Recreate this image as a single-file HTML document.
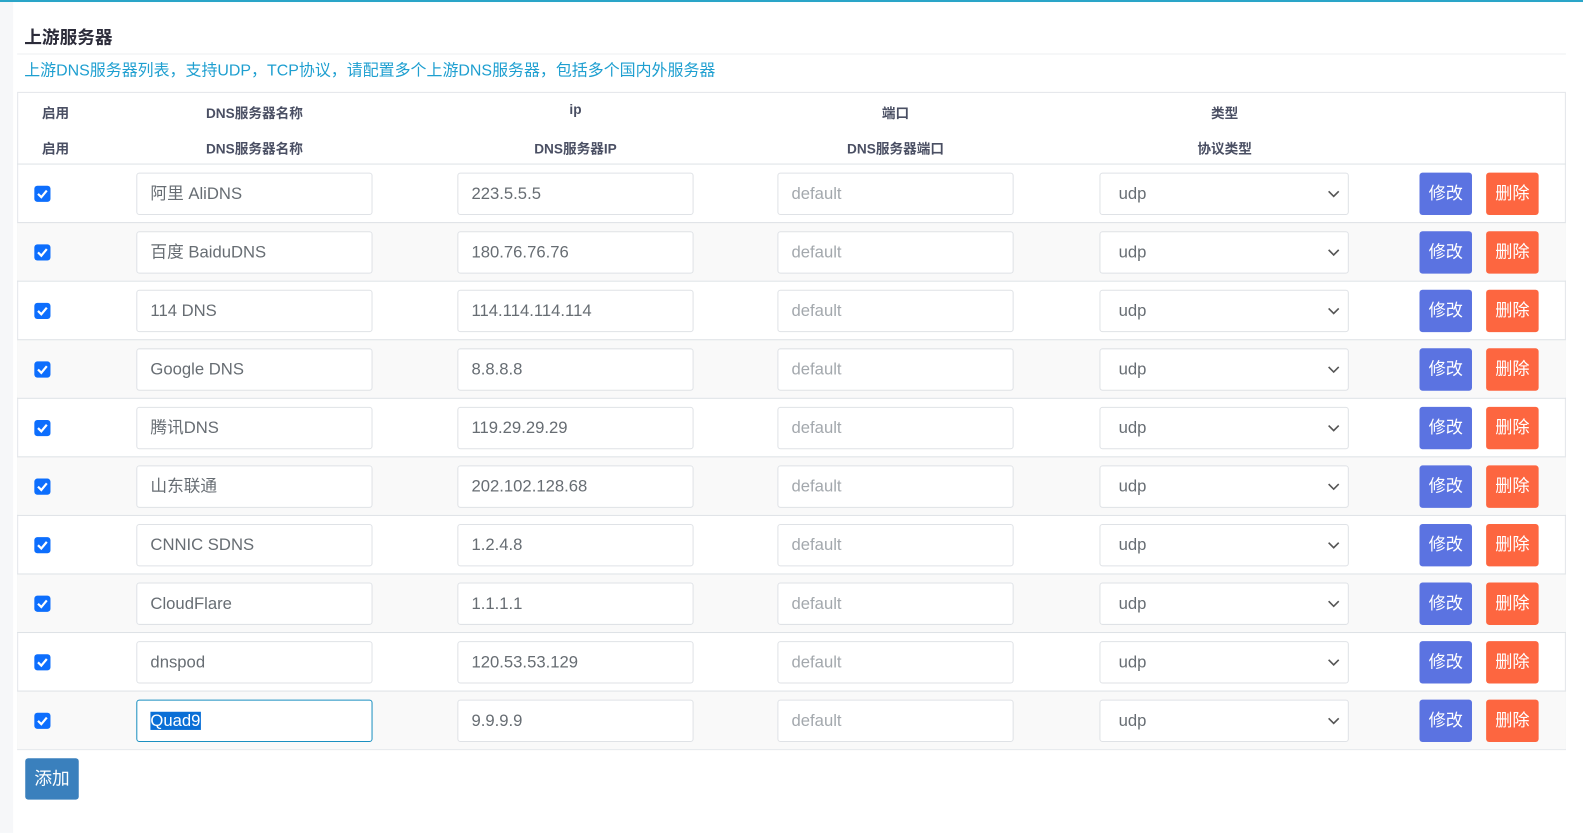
<!DOCTYPE html>
<html><head><meta charset="utf-8"><style>
*{box-sizing:border-box;margin:0;padding:0}
body{width:1583px;height:825px;background:#fff;font-family:"Liberation Sans","Noto Sans CJK SC",sans-serif;position:relative;overflow:hidden}
#w{position:absolute;left:0;top:0;width:1583px;height:825px;transform:scale(1.0096);transform-origin:0 0}
.strip{position:absolute;left:0;top:0;width:13px;height:825px;background:#f6f7f9}
.topline{position:absolute;left:0;top:0;width:1583px;height:2px;background:#2aa5c8}
.title{position:absolute;left:24px;top:24px;font-size:17.5px;font-weight:bold;color:#2c2c3a}
.hr{position:absolute;left:17px;top:53px;width:1534px;height:1px;background:#eceff2}
.desc{position:absolute;left:24px;top:57px;font-size:15.8px;color:#1e9fd0;white-space:nowrap}
.tbl{position:absolute;left:17px;top:91px;width:1534px;height:652px;border:1px solid #e3e6ea}
.th{position:absolute;font-size:13.5px;font-weight:bold;color:#4a4f63;transform:translateX(-50%);white-space:nowrap}
.row{position:absolute;left:17px;width:1534px;height:58px;border-top:1px solid #dee2e6}
.row.alt{background:#f9f9f9}
.cb{position:absolute;left:17px;top:21px;width:16px;height:16px;background:#0d6efd;border-radius:3px}
.cb svg{position:absolute;left:2px;top:2px}
.in{position:absolute;top:8px;height:42px;border:1px solid #dfe2e6;border-radius:3px;background:#fff;font-size:16.5px;color:#676d73;padding-left:13px;line-height:40px;white-space:nowrap}
.ph{color:#a3a8ad}
.sel{padding-left:18px}
.sel svg{position:absolute;right:8px;top:16px}
.b{position:absolute;top:8px;width:52px;height:42px;border-radius:3px;color:#fff;font-size:17px;text-align:center;line-height:42px}
.m{left:1389px;background:#5b73e1}
.d{left:1455px;background:#fd6640}
.focus{border:1px solid #1a8fc0}
.hl{background:#0a6fd6;color:#fff}
.add{position:absolute;left:25px;top:751px;width:53px;height:41px;background:#3a80bd;border-radius:3px;color:#fff;font-size:17.5px;text-align:center;line-height:41px}
</style></head><body><div id="w">
<div class="strip"></div><div class="topline"></div>
<div class="title">上游服务器</div>
<div class="hr"></div>
<div class="desc">上游DNS服务器列表，支持UDP，TCP协议，请配置多个上游DNS服务器，包括多个国内外服务器</div>
<div class="tbl"></div>
<div class="th" style="left:55px;top:101px">启用</div>
<div class="th" style="left:252px;top:101px">DNS服务器名称</div>
<div class="th" style="left:570px;top:101px">ip</div>
<div class="th" style="left:887px;top:101px">端口</div>
<div class="th" style="left:1213px;top:101px">类型</div>
<div class="th" style="left:55px;top:136px">启用</div>
<div class="th" style="left:252px;top:136px">DNS服务器名称</div>
<div class="th" style="left:570px;top:136px">DNS服务器IP</div>
<div class="th" style="left:887px;top:136px">DNS服务器端口</div>
<div class="th" style="left:1213px;top:136px">协议类型</div>
<div class="row" style="top:162px"><div class="cb"><svg width="12" height="12" viewBox="0 0 11 11"><path d="M1.5 5.5l3 3 5-6" stroke="#fff" stroke-width="2" fill="none"/></svg></div><div class="in" style="left:118px;width:234px">阿里 AliDNS</div><div class="in" style="left:436px;width:234px">223.5.5.5</div><div class="in ph" style="left:753px;width:234px">default</div><div class="in sel" style="left:1072px;width:247px">udp<svg width="12" height="8" viewBox="0 0 12 8"><path d="M1 1.5l5 5 5-5" stroke="#555" stroke-width="1.6" fill="none"/></svg></div><div class="b m">修改</div><div class="b d">删除</div></div>
<div class="row alt" style="top:220px"><div class="cb"><svg width="12" height="12" viewBox="0 0 11 11"><path d="M1.5 5.5l3 3 5-6" stroke="#fff" stroke-width="2" fill="none"/></svg></div><div class="in" style="left:118px;width:234px">百度 BaiduDNS</div><div class="in" style="left:436px;width:234px">180.76.76.76</div><div class="in ph" style="left:753px;width:234px">default</div><div class="in sel" style="left:1072px;width:247px">udp<svg width="12" height="8" viewBox="0 0 12 8"><path d="M1 1.5l5 5 5-5" stroke="#555" stroke-width="1.6" fill="none"/></svg></div><div class="b m">修改</div><div class="b d">删除</div></div>
<div class="row" style="top:278px"><div class="cb"><svg width="12" height="12" viewBox="0 0 11 11"><path d="M1.5 5.5l3 3 5-6" stroke="#fff" stroke-width="2" fill="none"/></svg></div><div class="in" style="left:118px;width:234px">114 DNS</div><div class="in" style="left:436px;width:234px">114.114.114.114</div><div class="in ph" style="left:753px;width:234px">default</div><div class="in sel" style="left:1072px;width:247px">udp<svg width="12" height="8" viewBox="0 0 12 8"><path d="M1 1.5l5 5 5-5" stroke="#555" stroke-width="1.6" fill="none"/></svg></div><div class="b m">修改</div><div class="b d">删除</div></div>
<div class="row alt" style="top:336px"><div class="cb"><svg width="12" height="12" viewBox="0 0 11 11"><path d="M1.5 5.5l3 3 5-6" stroke="#fff" stroke-width="2" fill="none"/></svg></div><div class="in" style="left:118px;width:234px">Google DNS</div><div class="in" style="left:436px;width:234px">8.8.8.8</div><div class="in ph" style="left:753px;width:234px">default</div><div class="in sel" style="left:1072px;width:247px">udp<svg width="12" height="8" viewBox="0 0 12 8"><path d="M1 1.5l5 5 5-5" stroke="#555" stroke-width="1.6" fill="none"/></svg></div><div class="b m">修改</div><div class="b d">删除</div></div>
<div class="row" style="top:394px"><div class="cb"><svg width="12" height="12" viewBox="0 0 11 11"><path d="M1.5 5.5l3 3 5-6" stroke="#fff" stroke-width="2" fill="none"/></svg></div><div class="in" style="left:118px;width:234px">腾讯DNS</div><div class="in" style="left:436px;width:234px">119.29.29.29</div><div class="in ph" style="left:753px;width:234px">default</div><div class="in sel" style="left:1072px;width:247px">udp<svg width="12" height="8" viewBox="0 0 12 8"><path d="M1 1.5l5 5 5-5" stroke="#555" stroke-width="1.6" fill="none"/></svg></div><div class="b m">修改</div><div class="b d">删除</div></div>
<div class="row alt" style="top:452px"><div class="cb"><svg width="12" height="12" viewBox="0 0 11 11"><path d="M1.5 5.5l3 3 5-6" stroke="#fff" stroke-width="2" fill="none"/></svg></div><div class="in" style="left:118px;width:234px">山东联通</div><div class="in" style="left:436px;width:234px">202.102.128.68</div><div class="in ph" style="left:753px;width:234px">default</div><div class="in sel" style="left:1072px;width:247px">udp<svg width="12" height="8" viewBox="0 0 12 8"><path d="M1 1.5l5 5 5-5" stroke="#555" stroke-width="1.6" fill="none"/></svg></div><div class="b m">修改</div><div class="b d">删除</div></div>
<div class="row" style="top:510px"><div class="cb"><svg width="12" height="12" viewBox="0 0 11 11"><path d="M1.5 5.5l3 3 5-6" stroke="#fff" stroke-width="2" fill="none"/></svg></div><div class="in" style="left:118px;width:234px">CNNIC SDNS</div><div class="in" style="left:436px;width:234px">1.2.4.8</div><div class="in ph" style="left:753px;width:234px">default</div><div class="in sel" style="left:1072px;width:247px">udp<svg width="12" height="8" viewBox="0 0 12 8"><path d="M1 1.5l5 5 5-5" stroke="#555" stroke-width="1.6" fill="none"/></svg></div><div class="b m">修改</div><div class="b d">删除</div></div>
<div class="row alt" style="top:568px"><div class="cb"><svg width="12" height="12" viewBox="0 0 11 11"><path d="M1.5 5.5l3 3 5-6" stroke="#fff" stroke-width="2" fill="none"/></svg></div><div class="in" style="left:118px;width:234px">CloudFlare</div><div class="in" style="left:436px;width:234px">1.1.1.1</div><div class="in ph" style="left:753px;width:234px">default</div><div class="in sel" style="left:1072px;width:247px">udp<svg width="12" height="8" viewBox="0 0 12 8"><path d="M1 1.5l5 5 5-5" stroke="#555" stroke-width="1.6" fill="none"/></svg></div><div class="b m">修改</div><div class="b d">删除</div></div>
<div class="row" style="top:626px"><div class="cb"><svg width="12" height="12" viewBox="0 0 11 11"><path d="M1.5 5.5l3 3 5-6" stroke="#fff" stroke-width="2" fill="none"/></svg></div><div class="in" style="left:118px;width:234px">dnspod</div><div class="in" style="left:436px;width:234px">120.53.53.129</div><div class="in ph" style="left:753px;width:234px">default</div><div class="in sel" style="left:1072px;width:247px">udp<svg width="12" height="8" viewBox="0 0 12 8"><path d="M1 1.5l5 5 5-5" stroke="#555" stroke-width="1.6" fill="none"/></svg></div><div class="b m">修改</div><div class="b d">删除</div></div>
<div class="row alt" style="top:684px"><div class="cb"><svg width="12" height="12" viewBox="0 0 11 11"><path d="M1.5 5.5l3 3 5-6" stroke="#fff" stroke-width="2" fill="none"/></svg></div><div class="in focus" style="left:118px;width:234px"><span class="hl">Quad9</span></div><div class="in" style="left:436px;width:234px">9.9.9.9</div><div class="in ph" style="left:753px;width:234px">default</div><div class="in sel" style="left:1072px;width:247px">udp<svg width="12" height="8" viewBox="0 0 12 8"><path d="M1 1.5l5 5 5-5" stroke="#555" stroke-width="1.6" fill="none"/></svg></div><div class="b m">修改</div><div class="b d">删除</div></div>
<div class="add">添加</div>
</div></body></html>
